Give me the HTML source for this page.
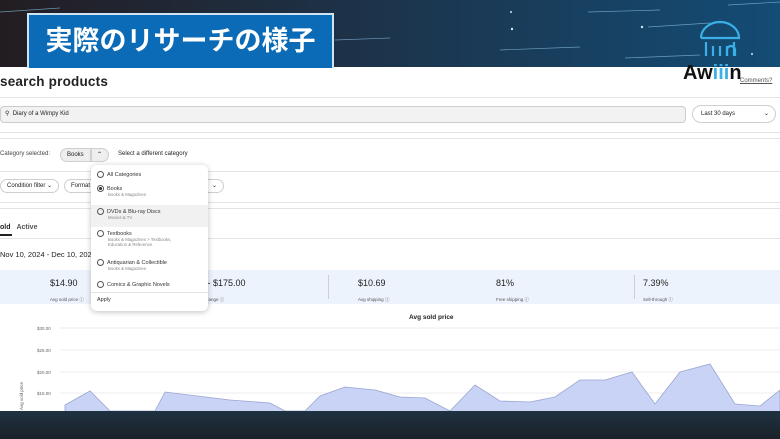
<!DOCTYPE html>
<html><head><meta charset="utf-8"><style>
*{margin:0;padding:0;box-sizing:border-box}
body{width:780px;height:439px;overflow:hidden;position:relative;background:#fff;font-family:"Liberation Sans","Noto Sans CJK JP",sans-serif;color:#222}
.abs{position:absolute}
.banner{left:0;top:0;width:780px;height:67px;background:linear-gradient(90deg,#231d22 0%,#1d3248 45%,#134c75 100%)}
.title{left:27px;top:13px;width:307px;height:55px;background:#0b6bb6;border:2px solid #cfe3f5;border-bottom:none;color:#fff;font-size:27px;font-weight:bold;line-height:53px;text-align:center;white-space:nowrap}
.line{left:0;width:780px;height:1px;background:#e4e4e4}
.pill{border:1px solid #cfcfcf;border-radius:9px;font-size:6px;line-height:13px;padding:0 6px;background:#fff}
.sm{font-size:6px}
.stat b{display:block;font-size:9px;font-weight:normal;color:#222}
.stat span{font-size:4.5px;color:#555}
.dd{left:91px;top:165px;width:117px;height:146px;background:#fff;border-radius:6px;box-shadow:0 1px 6px rgba(0,0,0,.25)}
.opt{position:absolute;left:6px;font-size:5.5px;color:#333}
.opt i{display:inline-block;width:7px;height:7px;border:1px solid #555;border-radius:50%;vertical-align:middle;margin-right:3px}
.opt small{display:block;font-size:4.3px;color:#888;margin-left:11px}
</style></head><body>
<div class="abs banner">
<svg width="780" height="67" class="abs" style="left:0;top:0">
<g stroke="#8fc3e8" stroke-width="0.7" opacity=".7">
<line x1="0" y1="12" x2="60" y2="8"/><line x1="588" y1="12" x2="660" y2="10"/><line x1="648" y1="27" x2="710" y2="23"/><line x1="500" y1="50" x2="580" y2="47"/><line x1="625" y1="58" x2="700" y2="55"/><line x1="728" y1="5" x2="780" y2="2"/><line x1="335" y1="40" x2="390" y2="38"/></g>
<g fill="#cfe6f7"><circle cx="512" cy="29" r="1.2"/><circle cx="642" cy="27" r="1.2"/><circle cx="752" cy="54" r="1"/><circle cx="511" cy="12" r="1"/></g>
</svg>
</div>
<div class="abs title">実際のリサーチの様子</div>
<svg class="abs" style="left:698px;top:20px" width="44" height="40"><g fill="none" stroke="#3ab0e6" stroke-width="2.2"><path d="M3 18 A19 16 0 0 1 41 18 L3 18"/><path d="M8 22v14M15 26v10M22 26v10M29 26v10M36 22v14"/><path d="M29 36v-6a4 4 0 0 1 8 0v6"/></g></svg>
<div class="abs" style="left:683px;top:62px;font-size:20px;color:#111;font-weight:bold">Aw<span style="color:#3ab0e6">ііі</span>n</div>
<div class="abs sm" style="left:740px;top:78px;color:#555;text-decoration:underline">Comments?</div>
<div class="abs" style="left:0;top:74px;font-size:13.5px;color:#222;font-weight:bold;letter-spacing:.2px">search products</div>
<div class="abs line" style="top:97px"></div>
<div class="abs" style="left:0;top:106px;width:686px;height:17px;background:#f2f2f2;border:1px solid #ccc;border-radius:4px;font-size:6px;line-height:15px;padding-left:4px">⚲ &nbsp;Diary of a Wimpy Kid</div>
<div class="abs pill" style="left:692px;top:105px;width:84px;height:18px;line-height:16px;padding-left:8px">Last 30 days<span style="float:right">⌄</span></div>
<div class="abs line" style="top:132px"></div><div class="abs line" style="top:138px"></div>
<div class="abs sm" style="left:0;top:151px;color:#444">Category selected:</div>
<div class="abs pill" style="left:60px;top:148px;width:31px;height:14px;background:#eee;border-radius:9px 0 0 9px">Books</div>
<div class="abs pill" style="left:91px;top:148px;width:18px;height:14px;background:#eee;border-radius:0 9px 9px 0;padding:0 5px">⌃</div>
<div class="abs sm" style="left:118px;top:151px">Select a different category</div>
<div class="abs line" style="top:171px"></div>
<div class="abs pill" style="left:0;top:179px;height:14px">Condition filter ⌄</div>
<div class="abs pill" style="left:64px;top:179px;height:14px;width:40px">Format</div>
<div class="abs pill" style="left:190px;top:179px;height:14px;width:34px;text-align:right">⌄</div>
<div class="abs line" style="top:202px"></div><div class="abs line" style="top:208px"></div>
<div class="abs" style="left:0;top:224px;font-size:7px;font-weight:bold">old <span style="color:#555;margin-left:4px">Active</span></div>
<div class="abs" style="left:0;top:234px;width:12px;height:2px;background:#222"></div>
<div class="abs line" style="top:238px"></div>
<div class="abs" style="left:0;top:250px;font-size:7.5px">Nov 10, 2024 - Dec 10, 2024</div>
<div class="abs" style="left:0;top:270px;width:780px;height:34px;background:#edf3fc"></div>
<div class="abs stat" style="left:50px;top:278px"><b>$14.90</b><span>Avg sold price ⓘ</span></div>
<div class="abs stat" style="left:200px;top:278px"><b>9 - $175.00</b><span>ice range ⓘ</span></div>
<div class="abs" style="left:328px;top:275px;width:1px;height:24px;background:#ccd"></div>
<div class="abs stat" style="left:358px;top:278px"><b>$10.69</b><span>Avg shipping ⓘ</span></div>
<div class="abs stat" style="left:496px;top:278px"><b>81%</b><span>Free shipping ⓘ</span></div>
<div class="abs" style="left:634px;top:275px;width:1px;height:24px;background:#ccd"></div>
<div class="abs stat" style="left:643px;top:278px"><b>7.39%</b><span>Sell-through ⓘ</span></div>
<div class="abs" style="left:409px;top:314px;font-size:6.5px;font-weight:bold">Avg sold price</div>
<svg class="abs" style="left:0;top:320px" width="780" height="92">
<g stroke="#eee" stroke-width="1"><line x1="60" y1="8" x2="780" y2="8"/><line x1="60" y1="30" x2="780" y2="30"/><line x1="60" y1="52" x2="780" y2="52"/><line x1="60" y1="73" x2="780" y2="73"/></g>
<g font-size="4.5" fill="#666" font-family="Liberation Sans"><text x="37" y="10">$30.00</text><text x="37" y="32">$25.00</text><text x="37" y="54">$20.00</text><text x="37" y="75">$15.00</text></g>
<text x="23" y="90" font-size="4.5" fill="#666" transform="rotate(-90 23 90)">Avg sold price</text>
<path d="M65 85 L90 71 L110 91 L155 91 L165 72 L230 80 L270 83 L285 91 L305 91 L320 76 L345 67 L375 70 L400 77 L425 78 L450 91 L475 65 L500 81 L530 82 L555 77 L580 60 L605 60 L632 52 L655 84 L680 52 L710 44 L735 84 L760 86 L780 70 L780 92 L65 92Z" fill="#c9d3f5" stroke="#9aa5d0" stroke-width="0.8"/>
</svg>
<div class="abs dd">
<div class="opt" style="top:6px"><i></i>All Categories</div>
<div class="opt" style="top:20px"><i style="background:radial-gradient(#333 40%,#fff 45%)"></i>Books<small>Books &amp; Magazines</small></div>
<div class="abs" style="left:0;top:40px;width:117px;height:22px;background:#f1f1f1"></div>
<div class="opt" style="top:43px"><i></i>DVDs &amp; Blu-ray Discs<small>Movies &amp; TV</small></div>
<div class="opt" style="top:65px"><i></i>Textbooks<small>Books &amp; Magazines &gt; Textbooks,<br>Education &amp; Reference</small></div>
<div class="opt" style="top:94px"><i></i>Antiquarian &amp; Collectible<small>Books &amp; Magazines</small></div>
<div class="opt" style="top:116px"><i></i>Comics &amp; Graphic Novels</div>
<div class="abs" style="left:0;top:127px;width:117px;height:1px;background:#e4e4e4"></div>
<div class="opt" style="top:132px">Apply</div>
</div>
<div class="abs" style="left:0;top:411px;width:780px;height:28px;background:linear-gradient(#1f3241,#1a2128)"></div>
</body></html>
